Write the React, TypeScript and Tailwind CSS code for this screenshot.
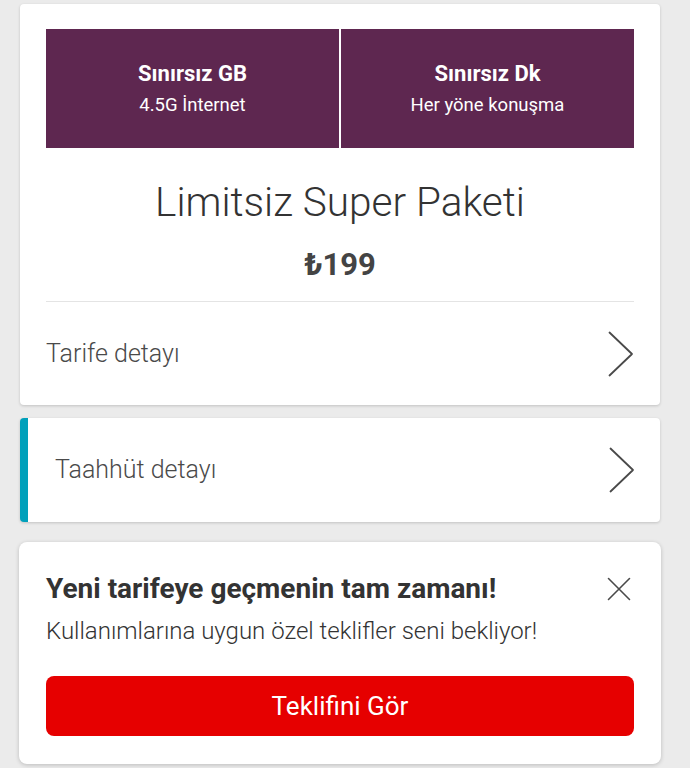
import React from "react";

const Chevron = () => (
  <svg width="26" height="46" viewBox="0 0 26 46" fill="none" className="shrink-0">
    <path d="M1.5 1.5 L24 23 L1.5 44.5" stroke="#4a4a4a" strokeWidth="1.8" strokeLinecap="round" strokeLinejoin="round" />
  </svg>
);

const CloseIcon = () => (
  <svg width="24" height="24" viewBox="0 0 24 24" fill="none" className="shrink-0">
    <path d="M1.5 1.5 L22.5 22.5 M22.5 1.5 L1.5 22.5" stroke="#4a4a4a" strokeWidth="1.6" strokeLinecap="round" />
  </svg>
);

export default function App() {
  return (
    <div
      className="min-h-[768px] w-full bg-[#ebebeb] pt-[4px] pb-[3px]"
      style={{ fontFamily: "Roboto, 'Noto Sans', sans-serif" }}
    >
      {/* Card 1 */}
      <div className="ml-[20px] w-[640px] rounded-[4px] bg-white px-[26px] pt-[25px] shadow-[0_1px_3px_rgba(0,0,0,0.18)]">
        <div className="grid h-[119px] grid-cols-2 gap-[2px] bg-white">
          <div className="flex flex-col items-center justify-center bg-[#5e2750] text-white">
            <div className="text-[22px] font-bold leading-[30px]">Sınırsız GB</div>
            <div className="mt-[3px] text-[18.5px] leading-[26px]">4.5G İnternet</div>
          </div>
          <div className="flex flex-col items-center justify-center bg-[#5e2750] text-white">
            <div className="text-[22px] font-bold leading-[30px]">Sınırsız Dk</div>
            <div className="mt-[3px] text-[18.5px] leading-[26px]">Her yöne konuşma</div>
          </div>
        </div>
        <div className="mt-[29px] text-center text-[40.5px] font-light leading-[50px] text-[#333333]">
          Limitsiz Super Paketi
        </div>
        <div className="mt-[20px] text-center text-[31px] font-bold leading-[36px] text-[#444444]">
          ₺199
        </div>
        <div className="mt-[18px] h-px bg-[#e4e4e4]" />
        <div className="flex h-[103px] items-center justify-between">
          <span className="text-[25px] font-light text-[#4a4a4a]">Tarife detayı</span>
          <Chevron />
        </div>
      </div>

      {/* Card 2 */}
      <div className="ml-[20px] mt-[13px] flex h-[104px] w-[640px] items-center justify-between overflow-hidden rounded-[4px] border-l-[8px] border-[#00a0bb] bg-white pl-[27px] pr-[25px] shadow-[0_1px_3px_rgba(0,0,0,0.18)]">
        <span className="text-[25px] font-light text-[#4a4a4a]">Taahhüt detayı</span>
        <Chevron />
      </div>

      {/* Card 3 */}
      <div className="ml-[19px] mt-[20px] w-[642px] rounded-[8px] bg-white px-[27px] pb-[28px] pt-[31px] shadow-[0_1px_4px_rgba(0,0,0,0.2)]">
        <div className="flex items-center justify-between">
          <span className="text-[28px] font-bold leading-[32px] text-[#333333]">
            Yeni tarifeye geçmenin tam zamanı!
          </span>
          <span className="mr-[3px]">
            <CloseIcon />
          </span>
        </div>
        <div className="mt-[11px] text-[24px] font-light leading-[30px] text-[#333333]">
          Kullanımlarına uygun özel teklifler seni bekliyor!
        </div>
        <button className="mt-[30px] flex h-[60px] w-full items-center justify-center rounded-[8px] bg-[#e60000] text-[26px] text-white">
          Teklifini Gör
        </button>
      </div>
    </div>
  );
}
